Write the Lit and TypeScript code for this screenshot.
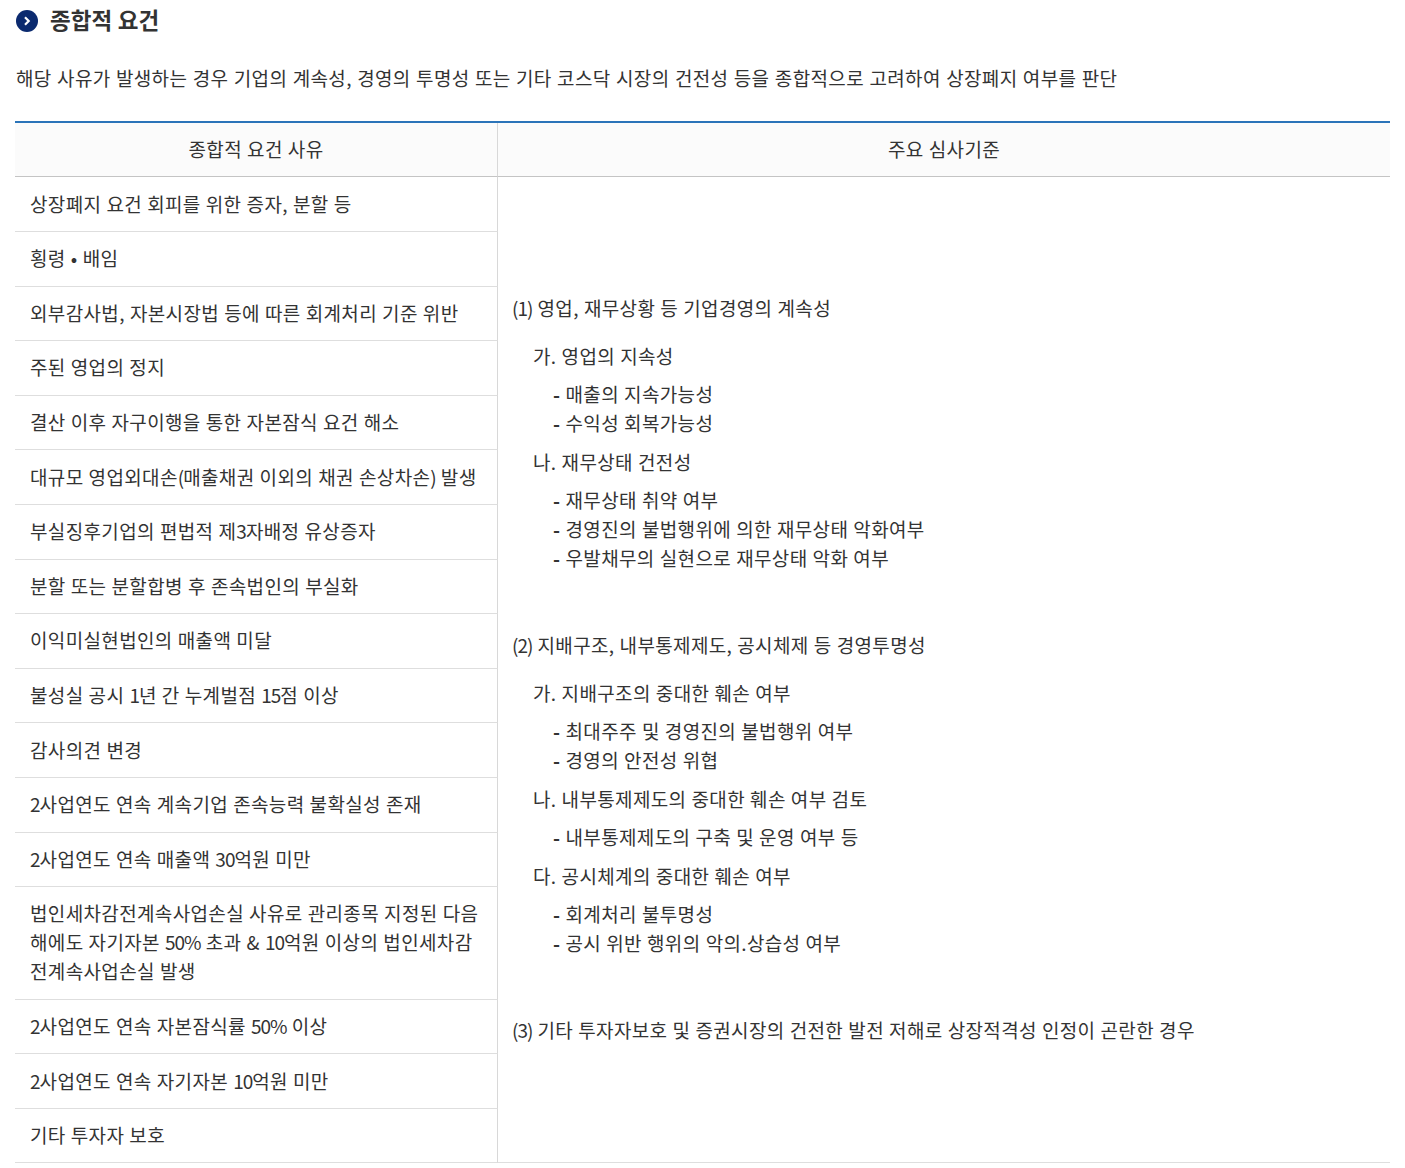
import { LitElement, html, css } from "lit";
import { customElement } from "lit/decorators.js";

const rows = [
  "상장폐지 요건 회피를 위한 증자, 분할 등",
  "횡령 • 배임",
  "외부감사법, 자본시장법 등에 따른 회계처리 기준 위반",
  "주된 영업의 정지",
  "결산 이후 자구이행을 통한 자본잠식 요건 해소",
  "대규모 영업외대손(매출채권 이외의 채권 손상차손) 발생",
  "부실징후기업의 편법적 제3자배정 유상증자",
  "분할 또는 분할합병 후 존속법인의 부실화",
  "이익미실현법인의 매출액 미달",
  "불성실 공시 1년 간 누계벌점 15점 이상",
  "감사의견 변경",
  "2사업연도 연속 계속기업 존속능력 불확실성 존재",
  "2사업연도 연속 매출액 30억원 미만",
  "법인세차감전계속사업손실 사유로 관리종목 지정된 다음\n해에도 자기자본 50% 초과 & 10억원 이상의 법인세차감\n전계속사업손실 발생",
  "2사업연도 연속 자본잠식률 50% 이상",
  "2사업연도 연속 자기자본 10억원 미만",
  "기타 투자자 보호",
];

type Sec = { title: string; groups: { head: string; items: string[] }[] };
const secs: Sec[] = [
  {
    title: "(1) 영업, 재무상황 등 기업경영의 계속성",
    groups: [
      { head: "가. 영업의 지속성", items: ["매출의 지속가능성", "수익성 회복가능성"] },
      { head: "나. 재무상태 건전성", items: ["재무상태 취약 여부", "경영진의 불법행위에 의한 재무상태 악화여부", "우발채무의 실현으로 재무상태 악화 여부"] },
    ],
  },
  {
    title: "(2) 지배구조, 내부통제제도, 공시체제 등 경영투명성",
    groups: [
      { head: "가. 지배구조의 중대한 훼손 여부", items: ["최대주주 및 경영진의 불법행위 여부", "경영의 안전성 위협"] },
      { head: "나. 내부통제제도의 중대한 훼손 여부 검토", items: ["내부통제제도의 구축 및 운영 여부 등"] },
      { head: "다. 공시체계의 중대한 훼손 여부", items: ["회계처리 불투명성", "공시 위반 행위의 악의.상습성 여부"] },
    ],
  },
  { title: "(3) 기타 투자자보호 및 증권시장의 건전한 발전 저해로 상장적격성 인정이 곤란한 경우", groups: [] },
];

const fmt = (text: string) =>
  text.split(/([0-9()%]+)/).map((part, i) => (i % 2 ? html`<span class="n">${part}</span>` : part));

@customElement("app-root")
export class AppRoot extends LitElement {
  static styles = css`
    :host {
      display: block;
      width: 1405px;
      height: 1168px;
      overflow: hidden;
      background: #fff;
      color: #333;
      font-family: "Noto Sans CJK KR", "Noto Sans", sans-serif;
      font-size: 19px;
      line-height: 29px;
      letter-spacing: 0.35px;
      word-spacing: 0.5px;
      box-sizing: border-box;
      padding: 0 15px;
    }
    .n { letter-spacing: -1px; }
    .head {
      display: flex;
      align-items: center;
      gap: 12px;
      height: 39px;
      padding-left: 1px;
      font-size: 22.5px;
      font-weight: 700;
      letter-spacing: 0;
      color: #333;
    }
    .head svg { flex: none; display: block; margin-top: 2px; }
    .lead { margin: 24px 0 0 1px; height: 58px; word-spacing: 0.8px; }
    table {
      width: 1375px;
      border-collapse: separate;
      border-spacing: 0;
      table-layout: fixed;
      border-top: 2px solid #2b74b9;
    }
    th {
      font-weight: 400;
      background: #fbfbfb;
      height: 53.4px;
      box-sizing: content-box;
      padding: 0;
      text-align: center;
      border-bottom: 1px solid #c4c4c4;
    }
    .th-label { display: block; margin-top: -2px; }
    th:first-child, td.l { border-right: 1px solid #d8d8d8; }
    .c1 { width: 483px; box-sizing: border-box; }
    td.l {
      box-sizing: border-box;
      padding: 11.3px 15px 13.3px;
      border-bottom: 1px solid #dedede;
      text-align: left;
    }
    td.r {
      padding: 17px 14px 0;
      border-bottom: 1px solid #dedede;
      vertical-align: middle;
    }
    .sec { margin-bottom: 58px; }
    .sec:last-child { margin-bottom: 0; }
    .title { margin-bottom: 19px; }
    .group { padding-left: 21px; margin-bottom: 10px; }
    .group:last-child { margin-bottom: 0; }
    .ghead { margin-bottom: 9px; }
    .item { padding-left: 20px; }
    .dash { font-weight: 700; }
    .line { display: block; white-space: nowrap; }
  `;

  render() {
    return html`
      <div class="head">
        <svg width="22" height="22" viewBox="0 0 22 22">
          <circle cx="11" cy="11" r="11" fill="#0b2a6f"></circle>
          <path d="M9 7.3 L12.7 11 L9 14.7" fill="none" stroke="#fff" stroke-width="2.2"></path>
        </svg>
        <span>종합적 요건</span>
      </div>
      <p class="lead">해당 사유가 발생하는 경우 기업의 계속성, 경영의 투명성 또는 기타 코스닥 시장의 건전성 등을 종합적으로 고려하여 상장폐지 여부를 판단</p>
      <table>
        <thead><tr>
          <th class="c1"><span class="th-label">종합적 요건 사유</span></th>
          <th><span class="th-label">주요 심사기준</span></th>
        </tr></thead>
        <tbody>
          ${rows.map(
            (r, i) => html`<tr>
              <td class="l">${r.split("\n").map((l) => html`<span class="line">${fmt(l)}</span>`)}</td>
              ${i === 0
                ? html`<td class="r" rowspan=${rows.length}>
                    ${secs.map(
                      (s) => html`<div class="sec">
                        <div class="title">${fmt(s.title)}</div>
                        ${s.groups.map(
                          (g) => html`<div class="group">
                            <div class="ghead">${g.head}</div>
                            ${g.items.map((t) => html`<div class="item"><span class="dash">-</span> ${t}</div>`)}
                          </div>`
                        )}
                      </div>`
                    )}
                  </td>`
                : ""}
            </tr>`
          )}
        </tbody>
      </table>
    `;
  }
}
